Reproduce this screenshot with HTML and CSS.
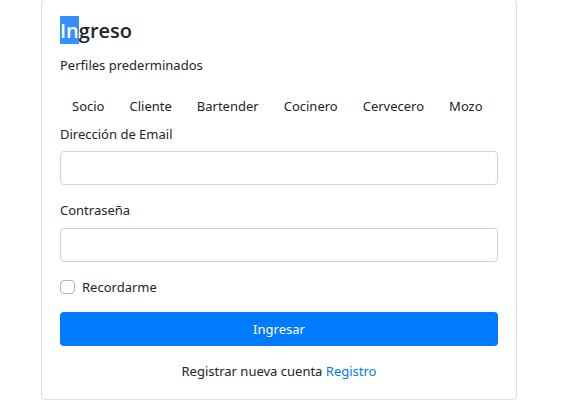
FILE: index.html
```html
<!DOCTYPE html>
<html lang="es">
<head>
<meta charset="utf-8">
<title>Ingreso</title>
<link rel="stylesheet" href="styles.css">
</head>
<body>
<main class="card">
  <h1 class="title"><mark class="selected">In</mark>greso</h1>
  <p class="subtitle">Perfiles prederminados</p>
  <div class="profiles">
    <button type="button" class="profile">Socio</button>
    <button type="button" class="profile">Cliente</button>
    <button type="button" class="profile">Bartender</button>
    <button type="button" class="profile">Cocinero</button>
    <button type="button" class="profile">Cervecero</button>
    <button type="button" class="profile">Mozo</button>
  </div>
  <form class="form">
    <div class="field">
      <label for="email">Dirección de Email</label>
      <input class="control" id="email" type="email">
    </div>
    <div class="field">
      <label for="password">Contraseña</label>
      <input class="control" id="password" type="password">
    </div>
    <div class="remember">
      <input class="check" id="remember" type="checkbox">
      <label for="remember">Recordarme</label>
    </div>
    <button type="submit" class="submit">Ingresar</button>
  </form>
  <p class="register">Registrar nueva cuenta <a href="#registro">Registro</a></p>
</main>
</body>
</html>
```
FILE: styles.css
```css
* {
  box-sizing: border-box;
}

body {
  margin: 0;
  background: #fff;
  color: #212529;
  font: 13px/22px "Noto Sans", "Open Sans", sans-serif;
}

button,
input {
  font: inherit;
}

.card {
  margin: -1px 64px 0 41px;
  padding: 16px 18px 17px;
  border: 1px solid #dfdfdf;
  border-radius: 4px;
}

.title {
  margin: 0 0 10px;
  font-family: "Open Sans", "Noto Sans", sans-serif;
  font-size: 20px;
  line-height: 26px;
  font-weight: 600;
}

.selected {
  display: inline-block;
  padding-top: 2px;
  background: #3390ff;
  color: #fff;
}

.subtitle {
  margin: 0 0 13px;
}

.profiles {
  display: flex;
  gap: 1px;
}

.profile {
  padding: 6px 12px;
  border: 0;
  background: transparent;
  color: inherit;
  white-space: nowrap;
}

.form {
  display: flex;
  flex-direction: column;
  gap: 14px;
}

.field {
  display: flex;
  flex-direction: column;
  gap: 6px;
}

.field + .field {
  gap: 7px;
}

.control {
  width: 100%;
  height: 34px;
  padding: 6px 12px;
  border: 1px solid #ced4da;
  border-radius: 4px;
  background: #fff;
}

.remember {
  display: flex;
  align-items: center;
  gap: 7px;
}

.check {
  appearance: none;
  width: 15px;
  height: 14px;
  margin: 0;
  border: 1px solid #adb5bd;
  border-radius: 4px;
  background: #fff;
}

.check:checked {
  background: #007bff;
}

.submit {
  height: 34px;
  padding: 0 12px;
  border: 0;
  border-radius: 4px;
  background: #007bff;
  color: #fff;
}

.register {
  margin: 14px 0 0;
  text-align: center;
}

.register a {
  color: #007bff;
  text-decoration: none;
}
```
